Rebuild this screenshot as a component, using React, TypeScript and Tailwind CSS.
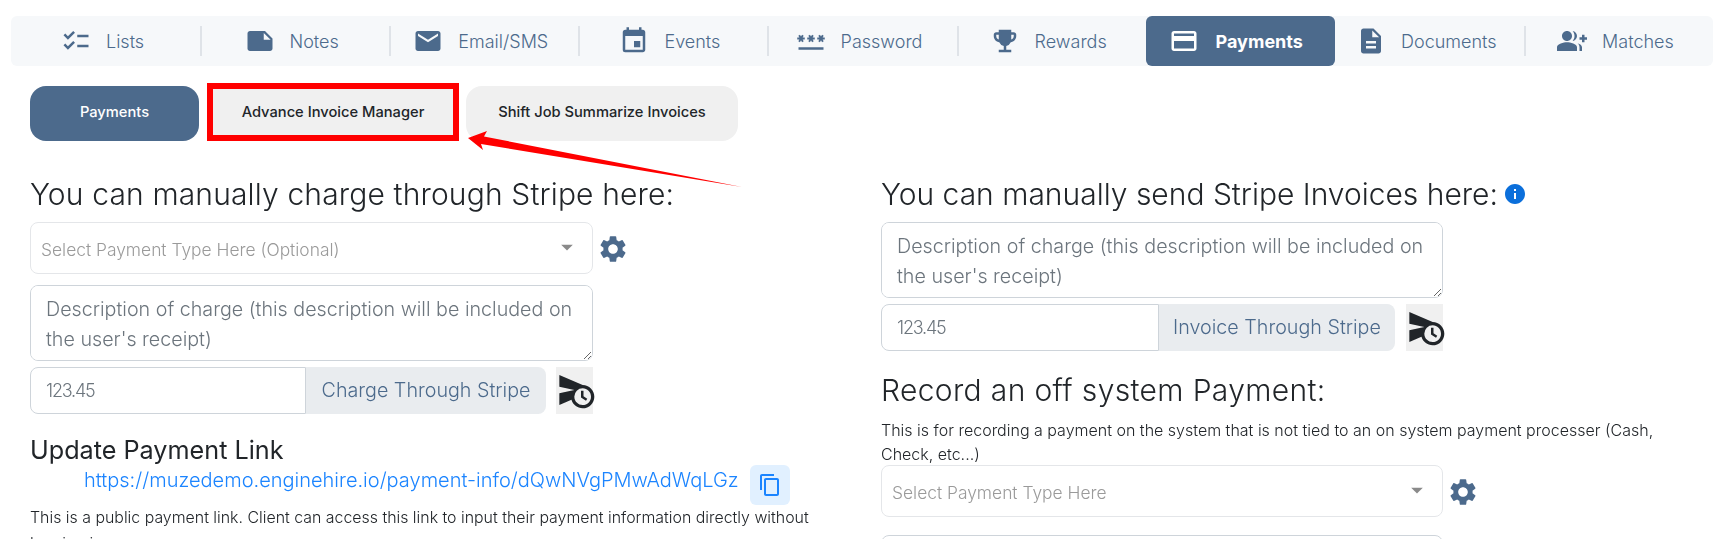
import React from "react";
import {
  MdChecklist, MdNote, MdEmail, MdEvent, MdPassword, MdEmojiEvents, MdCreditCard,
  MdDescription, MdGroupAdd, MdSettings, MdScheduleSend, MdContentCopy, MdInfo, MdArrowDropDown,
} from "react-icons/md";

const tabs = [
  { label: "Lists", Icon: MdChecklist },
  { label: "Notes", Icon: MdNote },
  { label: "Email/SMS", Icon: MdEmail },
  { label: "Events", Icon: MdEvent },
  { label: "Password", Icon: MdPassword },
  { label: "Rewards", Icon: MdEmojiEvents },
  { label: "Payments", Icon: MdCreditCard, active: true },
  { label: "Documents", Icon: MdDescription },
  { label: "Matches", Icon: MdGroupAdd },
];

function Nav() {
  return (
    <div className="mx-[11px] mt-4 grid h-[50px] w-[1702px] grid-cols-9 rounded-md bg-[#f6f8fa]">
      {tabs.map((t, i) => (
        <div
          key={t.label}
          className={
            t.active
              ? "flex h-[50px] items-center justify-center gap-[17px] rounded-md bg-[#4c6a8c] pr-[9px] text-white"
              : "flex h-[50px] items-center py-[10px] text-[#4c6a8c]"
          }
        >
          {t.active ? (
            <>
              <t.Icon size={30} />
              <span className="text-[18px] font-bold">{t.label}</span>
            </>
          ) : (
            <div
              className={
                i === 5 || i === 8
                  ? "flex h-[30px] w-full items-center justify-center gap-[15px] pr-[6px]"
                  : "-mr-[2px] flex h-[30px] w-[calc(100%+2px)] items-center justify-center gap-[15px] border-r-2 border-[#dfe3e8] pr-[6px]"
              }
            >
              <t.Icon size={30} />
              <span className="text-[18px] font-light">{t.label}</span>
            </div>
          )}
        </div>
      ))}
    </div>
  );
}

function SubTabs() {
  return (
    <div className="mt-5 flex h-[55px] text-[14.7px] font-medium">
      <div className="flex w-[169px] items-center justify-center rounded-2xl bg-[#4c6a8c] pb-[2px] text-white">Payments</div>
      <div className="relative ml-[9px] flex w-[250px] items-center justify-center bg-[#f0f0f0] pb-[2px] text-[#212529]">
        Advance Invoice Manager
        <div className="absolute inset-x-[-1px] bottom-0 top-[-3px] border-[6px] border-[#ff0000]" />
      </div>
      <div className="ml-2 flex w-[272px] items-center justify-center rounded-2xl bg-[#f0f0f0] pb-[2px] text-[#212529]">
        Shift Job Summarize Invoices
      </div>
    </div>
  );
}

function Select({ text, width }: { text: string; width: string }) {
  return (
    <div className="flex items-center">
      <div className={`${width} flex h-[52px] items-center justify-between rounded-lg border border-[#e4e6e9] bg-white pl-[10px] pr-[16px] text-[17.4px] font-light text-[#9a9a9a]`}>
        <span className="pt-[4px]">{text}</span>
        <MdArrowDropDown size={28} className="mb-[2px] mr-[-5px] text-[#8a8a8a]" />
      </div>
      <MdSettings size={32} className="ml-[4px] mt-[1px] text-[#4c6a8c]" />
    </div>
  );
}

function Desc({ width }: { width: string }) {
  return (
    <textarea
      className={`${width} block h-[76px] rounded-lg border border-[#ced4da] bg-white px-[15px] py-[8px] text-[19.7px] font-light leading-[30px] text-[#495057] placeholder:text-[#6c757d]`}
      placeholder="Description of charge (this description will be included on the user's receipt)"
    />
  );
}

function AmountRow({ label, width, input, button, gap }: { label: string; width: string; input: string; button: string; gap: string }) {
  return (
    <div className={`${width} mt-[6px] flex h-[47px]`}>
      <input
        className={`${input} h-full rounded-l-lg border border-[#ced4da] bg-white px-[15px] text-[18px] font-light tracking-[-1.2px] placeholder:text-[#6c757d]`}
        placeholder="123.45"
      />
      <div className={`${button} flex h-full items-center justify-center rounded-r-lg bg-[#e9ecef] text-[19.7px] font-light text-[#4c6a8c]`}>
        {label}
      </div>
      <div className={`${gap} flex h-full w-[37px] items-center justify-center bg-[#f0f0f0] text-[#212529]`}>
        <MdScheduleSend size={40} className="mb-[2px] shrink-0 translate-x-[1px]" />
      </div>
    </div>
  );
}

function Heading({ children, className = "" }: { children: React.ReactNode; className?: string }) {
  return <h2 className={`h-9 text-[30px] font-light leading-9 text-[#212529] ${className}`}>{children}</h2>;
}

export default function App() {
  return (
    <div
      className="relative h-[539px] w-[1720px] overflow-hidden bg-white"
      style={{ fontFamily: "Inter, 'Noto Sans', sans-serif" }}
    >
      <Nav />
      <div className="px-[30px]">
        <SubTabs />
        <div className="mt-[35px] flex">
          <div className="w-[851px]">
            <Heading className="mb-[10px] tracking-[0.15px]">You can manually charge through Stripe here:</Heading>
            <Select text="Select Payment Type Here (Optional)" width="w-[563px]" />
            <div className="mt-[11px]">
              <Desc width="w-[563px]" />
            </div>
            <AmountRow label="Charge Through Stripe" width="w-[563px]" input="w-[276px]" button="w-[240px]" gap="ml-[10px]" />
            <h3 className="mt-[21px] h-[30px] text-[25.2px] font-normal leading-[30px] text-[#212529]">Update Payment Link</h3>
            <div className="flex h-10 items-center pl-[54px]">
              <a className="mb-[10px] text-[20px] font-light text-[#1b84ff]">https://muzedemo.enginehire.io/payment-info/dQwNVgPMwAdWqLGz</a>
              <div className="ml-[11px] flex h-10 w-10 items-center justify-center rounded-md bg-[#e1f0ff] text-[#1b84ff]">
                <MdContentCopy size={24} />
              </div>
            </div>
            <p className="w-[800px] text-[15.9px] font-light leading-[26px] text-[#212529]">
              This is a public payment link. Client can access this link to input their payment information directly without logging in.
            </p>
          </div>
          <div className="flex-1">
            <Heading className="mb-[10px] flex items-center">
              You can manually send Stripe Invoices here:
              <MdInfo size={24} className="mb-[1px] ml-[5px] text-[#0b6fdb]" />
            </Heading>
            <Desc width="w-[562px]" />
            <AmountRow label="Invoice Through Stripe" width="w-[562px]" input="w-[278px]" button="w-[236px]" gap="ml-[11px]" />
            <Heading className="mt-[21px] tracking-[0.35px]">Record an off system Payment:</Heading>
            <p className="mt-[10px] w-[790px] text-[16px] font-light leading-6 text-[#212529]">
              This is for recording a payment on the system that is not tied to an on system payment processer (Cash, Check, etc...)
            </p>
            <div className="-mt-[1px]">
              <Select text="Select Payment Type Here" width="w-[562px]" />
            </div>
            <div className="mt-[18px] h-[76px] w-[562px] rounded-lg border border-[#ced4da]" />
          </div>
        </div>
      </div>
      <svg className="pointer-events-none absolute left-0 top-0" width="1720" height="539">
        <polygon points="468,138 487,131 484,136.5 742,187 481,144 483,150" fill="#ff0000" />
      </svg>
    </div>
  );
}
